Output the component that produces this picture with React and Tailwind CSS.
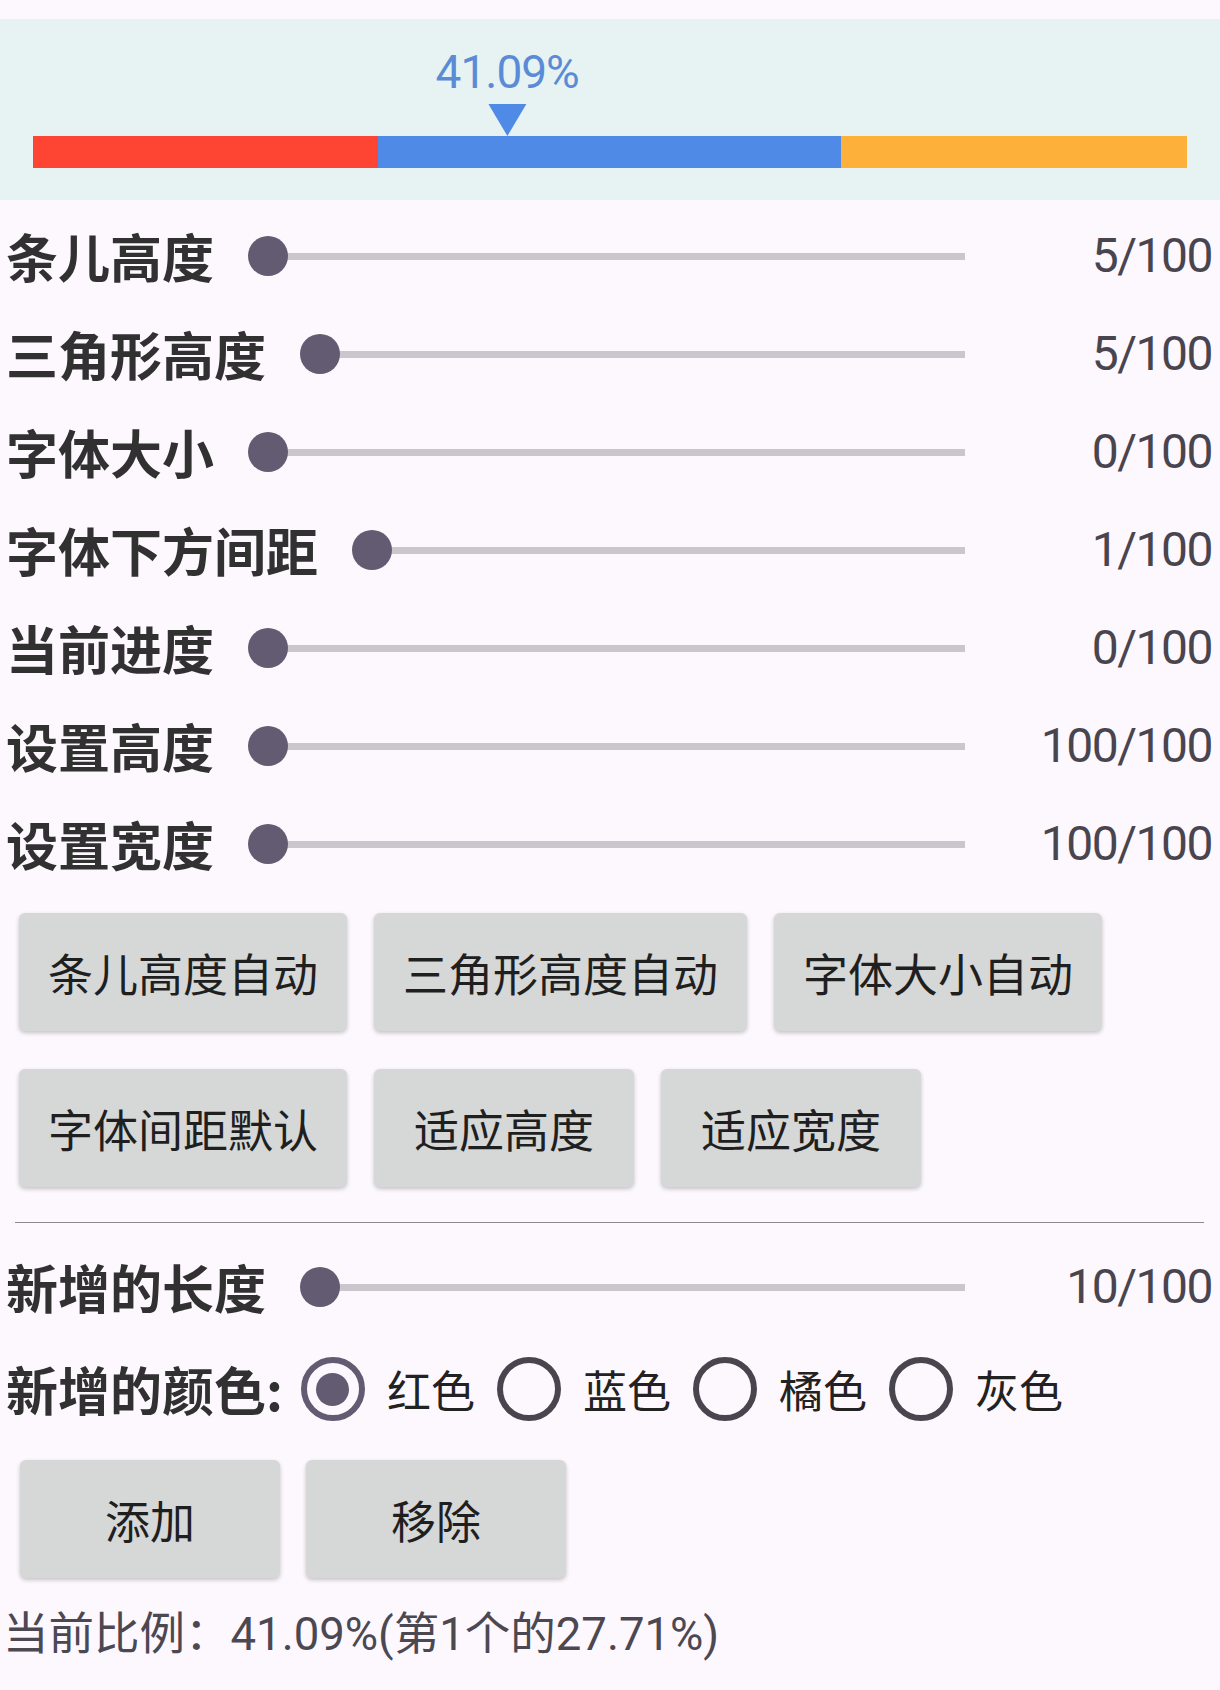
import React from 'react';

const segments = [
  { color: 'bg-[#fe4433]', weight: 345 },
  { color: 'bg-[#4f8be6]', weight: 463 },
  { color: 'bg-[#feb13a]', weight: 346 },
];

const progress = 41.09;

const sliders = [
  { label: '条儿高度', value: '5/100' },
  { label: '三角形高度', value: '5/100' },
  { label: '字体大小', value: '0/100' },
  { label: '字体下方间距', value: '1/100' },
  { label: '当前进度', value: '0/100' },
  { label: '设置高度', value: '100/100' },
  { label: '设置宽度', value: '100/100' },
];

const colors = [
  { name: '红色', checked: true },
  { name: '蓝色' },
  { name: '橘色' },
  { name: '灰色' },
];

const cjk = "font-['Noto_Sans_CJK_SC',sans-serif]";

function Slider() {
  return (
    <div className="relative flex h-[40px] flex-1 items-center">
      <div className="ml-[20px] h-[7px] flex-1 bg-[#cbc6cd]" />
      <div className="absolute left-0 top-0 h-[40px] w-[40px] rounded-full bg-[#625b71]" />
    </div>
  );
}

function SliderRow({ label, value }) {
  return (
    <div className="flex h-[98px] items-center pl-[6px]">
      <span className={`${cjk} text-[52px] font-bold leading-none text-[#313131]`}>{label}</span>
      <div className="ml-[34px] flex flex-1">
        <Slider />
      </div>
      <span className="w-[255px] pr-[8px] text-right font-['Roboto',sans-serif] text-[48px] leading-none tracking-[-1.5px] text-[#49454f]">
        {value}
      </span>
    </div>
  );
}

function Btn({ children }) {
  return (
    <button
      className={`${cjk} h-[118px] min-w-[260px] rounded-[6px] bg-[#d6d7d7] px-[29px] text-[45px] leading-none text-[#1f1f1f] shadow-[0_2px_4px_rgba(0,0,0,0.22)]`}
    >
      {children}
    </button>
  );
}

function Radio({ checked }) {
  return (
    <span
      className={`flex h-[64px] w-[64px] items-center justify-center rounded-full border-[6px] ${
        checked ? 'border-[#625b71]' : 'border-[#49454f]'
      }`}
    >
      {checked && <span className="h-[33px] w-[33px] rounded-full bg-[#625b71]" />}
    </span>
  );
}

export default function App() {
  return (
    <div className="min-h-[1690px] w-[1220px] bg-[#fdf7fe] pt-[19px]">
      {/* progress bar preview */}
      <div className="h-[181px] bg-[#e6f3f2] px-[33px] pt-[30px]">
        <div className="relative h-[87px]">
          <div
            className="absolute top-0 flex -translate-x-1/2 flex-col items-center"
            style={{ left: `${progress}%` }}
          >
            <span className="font-['Roboto',sans-serif] text-[46px] leading-none tracking-[-1px] text-[#5b8bd6]">
              {progress.toFixed(2)}%
            </span>
            <svg className="mt-[9px]" width="38" height="32" viewBox="0 0 38 32">
              <polygon points="0,0 38,0 19,32" fill="#4f8be6" />
            </svg>
          </div>
        </div>
        <div className="flex h-[32px]">
          {segments.map((s, i) => (
            <div key={i} className={s.color} style={{ flexGrow: s.weight, flexBasis: 0 }} />
          ))}
        </div>
      </div>

      {/* sliders */}
      <div className="pt-[7px]">
        {sliders.map((s) => (
          <SliderRow key={s.label} label={s.label} value={s.value} />
        ))}
      </div>

      {/* auto buttons */}
      <div className="mt-[20px] flex gap-[27px] pl-[19px]">
        <Btn>条儿高度自动</Btn>
        <Btn>三角形高度自动</Btn>
        <Btn>字体大小自动</Btn>
      </div>
      <div className="mt-[38px] flex gap-[27px] pl-[19px]">
        <Btn>字体间距默认</Btn>
        <Btn>适应高度</Btn>
        <Btn>适应宽度</Btn>
      </div>

      <div className="ml-[15px] mr-[16px] mt-[35px] h-px bg-[#8a8a8a]" />

      <div className="mt-[15px]">
        <SliderRow label="新增的长度" value="10/100" />
      </div>

      {/* color radios */}
      <div className="flex h-[106px] items-center gap-[22px] pl-[6px]">
        <span className={`${cjk} mr-[-4px] text-[52px] font-bold leading-none text-[#313131]`}>新增的颜色:</span>
        {colors.map((c) => (
          <label key={c.name} className="flex items-center gap-[22px]">
            <Radio checked={c.checked} />
            <span className={`${cjk} text-[44px] leading-none text-[#222222]`}>{c.name}</span>
          </label>
        ))}
      </div>

      <div className="mt-[18px] flex gap-[26px] pl-[20px]">
        <Btn>添加</Btn>
        <Btn>移除</Btn>
      </div>

      <div className="mt-[34px] pl-[3px] font-['Roboto','Noto_Sans_CJK_SC',sans-serif] text-[45.5px] leading-none text-[#4c4852]">
        当前比例：41.09%(第1个的27.71%)
      </div>
    </div>
  );
}
